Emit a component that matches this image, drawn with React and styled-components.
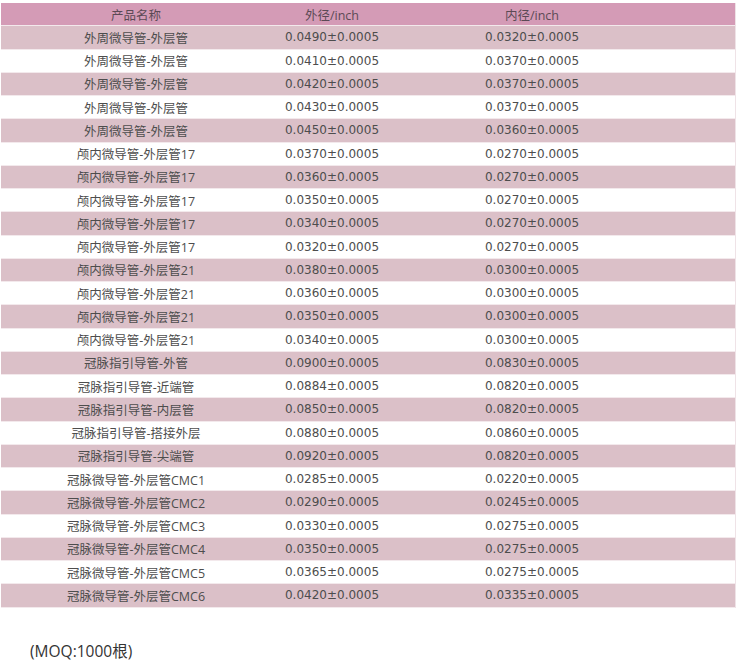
import React from 'react';
import styled, { createGlobalStyle } from 'styled-components';

const GlobalStyle = createGlobalStyle`
	body {
		margin: 0;
		background: #fff;
		font-family: "DejaVu Sans", "Noto Sans CJK SC", sans-serif;
	}
`;

const rows = [
	['外周微导管-外层管', '0.0490±0.0005', '0.0320±0.0005'],
	['外周微导管-外层管', '0.0410±0.0005', '0.0370±0.0005'],
	['外周微导管-外层管', '0.0420±0.0005', '0.0370±0.0005'],
	['外周微导管-外层管', '0.0430±0.0005', '0.0370±0.0005'],
	['外周微导管-外层管', '0.0450±0.0005', '0.0360±0.0005'],
	['颅内微导管-外层管17', '0.0370±0.0005', '0.0270±0.0005'],
	['颅内微导管-外层管17', '0.0360±0.0005', '0.0270±0.0005'],
	['颅内微导管-外层管17', '0.0350±0.0005', '0.0270±0.0005'],
	['颅内微导管-外层管17', '0.0340±0.0005', '0.0270±0.0005'],
	['颅内微导管-外层管17', '0.0320±0.0005', '0.0270±0.0005'],
	['颅内微导管-外层管21', '0.0380±0.0005', '0.0300±0.0005'],
	['颅内微导管-外层管21', '0.0360±0.0005', '0.0300±0.0005'],
	['颅内微导管-外层管21', '0.0350±0.0005', '0.0300±0.0005'],
	['颅内微导管-外层管21', '0.0340±0.0005', '0.0300±0.0005'],
	['冠脉指引导管-外管', '0.0900±0.0005', '0.0830±0.0005'],
	['冠脉指引导管-近端管', '0.0884±0.0005', '0.0820±0.0005'],
	['冠脉指引导管-内层管', '0.0850±0.0005', '0.0820±0.0005'],
	['冠脉指引导管-搭接外层', '0.0880±0.0005', '0.0860±0.0005'],
	['冠脉指引导管-尖端管', '0.0920±0.0005', '0.0820±0.0005'],
	['冠脉微导管-外层管CMC1', '0.0285±0.0005', '0.0220±0.0005'],
	['冠脉微导管-外层管CMC2', '0.0290±0.0005', '0.0245±0.0005'],
	['冠脉微导管-外层管CMC3', '0.0330±0.0005', '0.0275±0.0005'],
	['冠脉微导管-外层管CMC4', '0.0350±0.0005', '0.0275±0.0005'],
	['冠脉微导管-外层管CMC5', '0.0365±0.0005', '0.0275±0.0005'],
	['冠脉微导管-外层管CMC6', '0.0420±0.0005', '0.0335±0.0005'],
];

const Page = styled.div`
	padding: 3px 1px 0 1px;
`;

const Table = styled.div`
	width: 734px;
	border-right: 1px solid #efe3e7;
`;

// one table row, header or body
const Row = styled.div`
	display: grid;
	grid-template-columns: 270px 122px 1fr;
	height: 22.25px;
	align-items: center;
	border-bottom: 1px solid #f3e9ec;
	background: ${(p) => (p.head ? '#d49bb6' : p.shade ? '#dbc0c8' : '#fff')};
	color: ${(p) => (p.head ? '#5b4a55' : '#4d4d4d')};
`;

const Cell = styled.div`
	text-align: center;
	white-space: nowrap;
	padding-right: ${(p) => (p.last ? '64px' : '0')};
	font-family: ${(p) =>
		p.name
			? '"Open Sans", "Noto Sans CJK SC", sans-serif'
			: '"DejaVu Sans", "Noto Sans CJK SC", sans-serif'};
	font-size: ${(p) => (p.name ? '12.5px' : '12px')};
`;

const Note = styled.p`
	margin: 33px 0 0 29px;
	font-family: "Open Sans", "Noto Sans CJK SC", sans-serif;
	font-size: 15.5px;
	line-height: 21px;
	color: #333;
`;

export default function App() {
	return (
		<Page>
			<GlobalStyle />
			<Table>
				<Row head>
					<Cell name>产品名称</Cell>
					<Cell name>外径/inch</Cell>
					<Cell name last>内径/inch</Cell>
				</Row>
				{rows.map((r, i) => (
					<Row key={i} shade={i % 2 === 0}>
						<Cell name>{r[0]}</Cell>
						<Cell>{r[1]}</Cell>
						<Cell last>{r[2]}</Cell>
					</Row>
				))}
			</Table>
			<Note>(MOQ:1000根)</Note>
		</Page>
	);
}
